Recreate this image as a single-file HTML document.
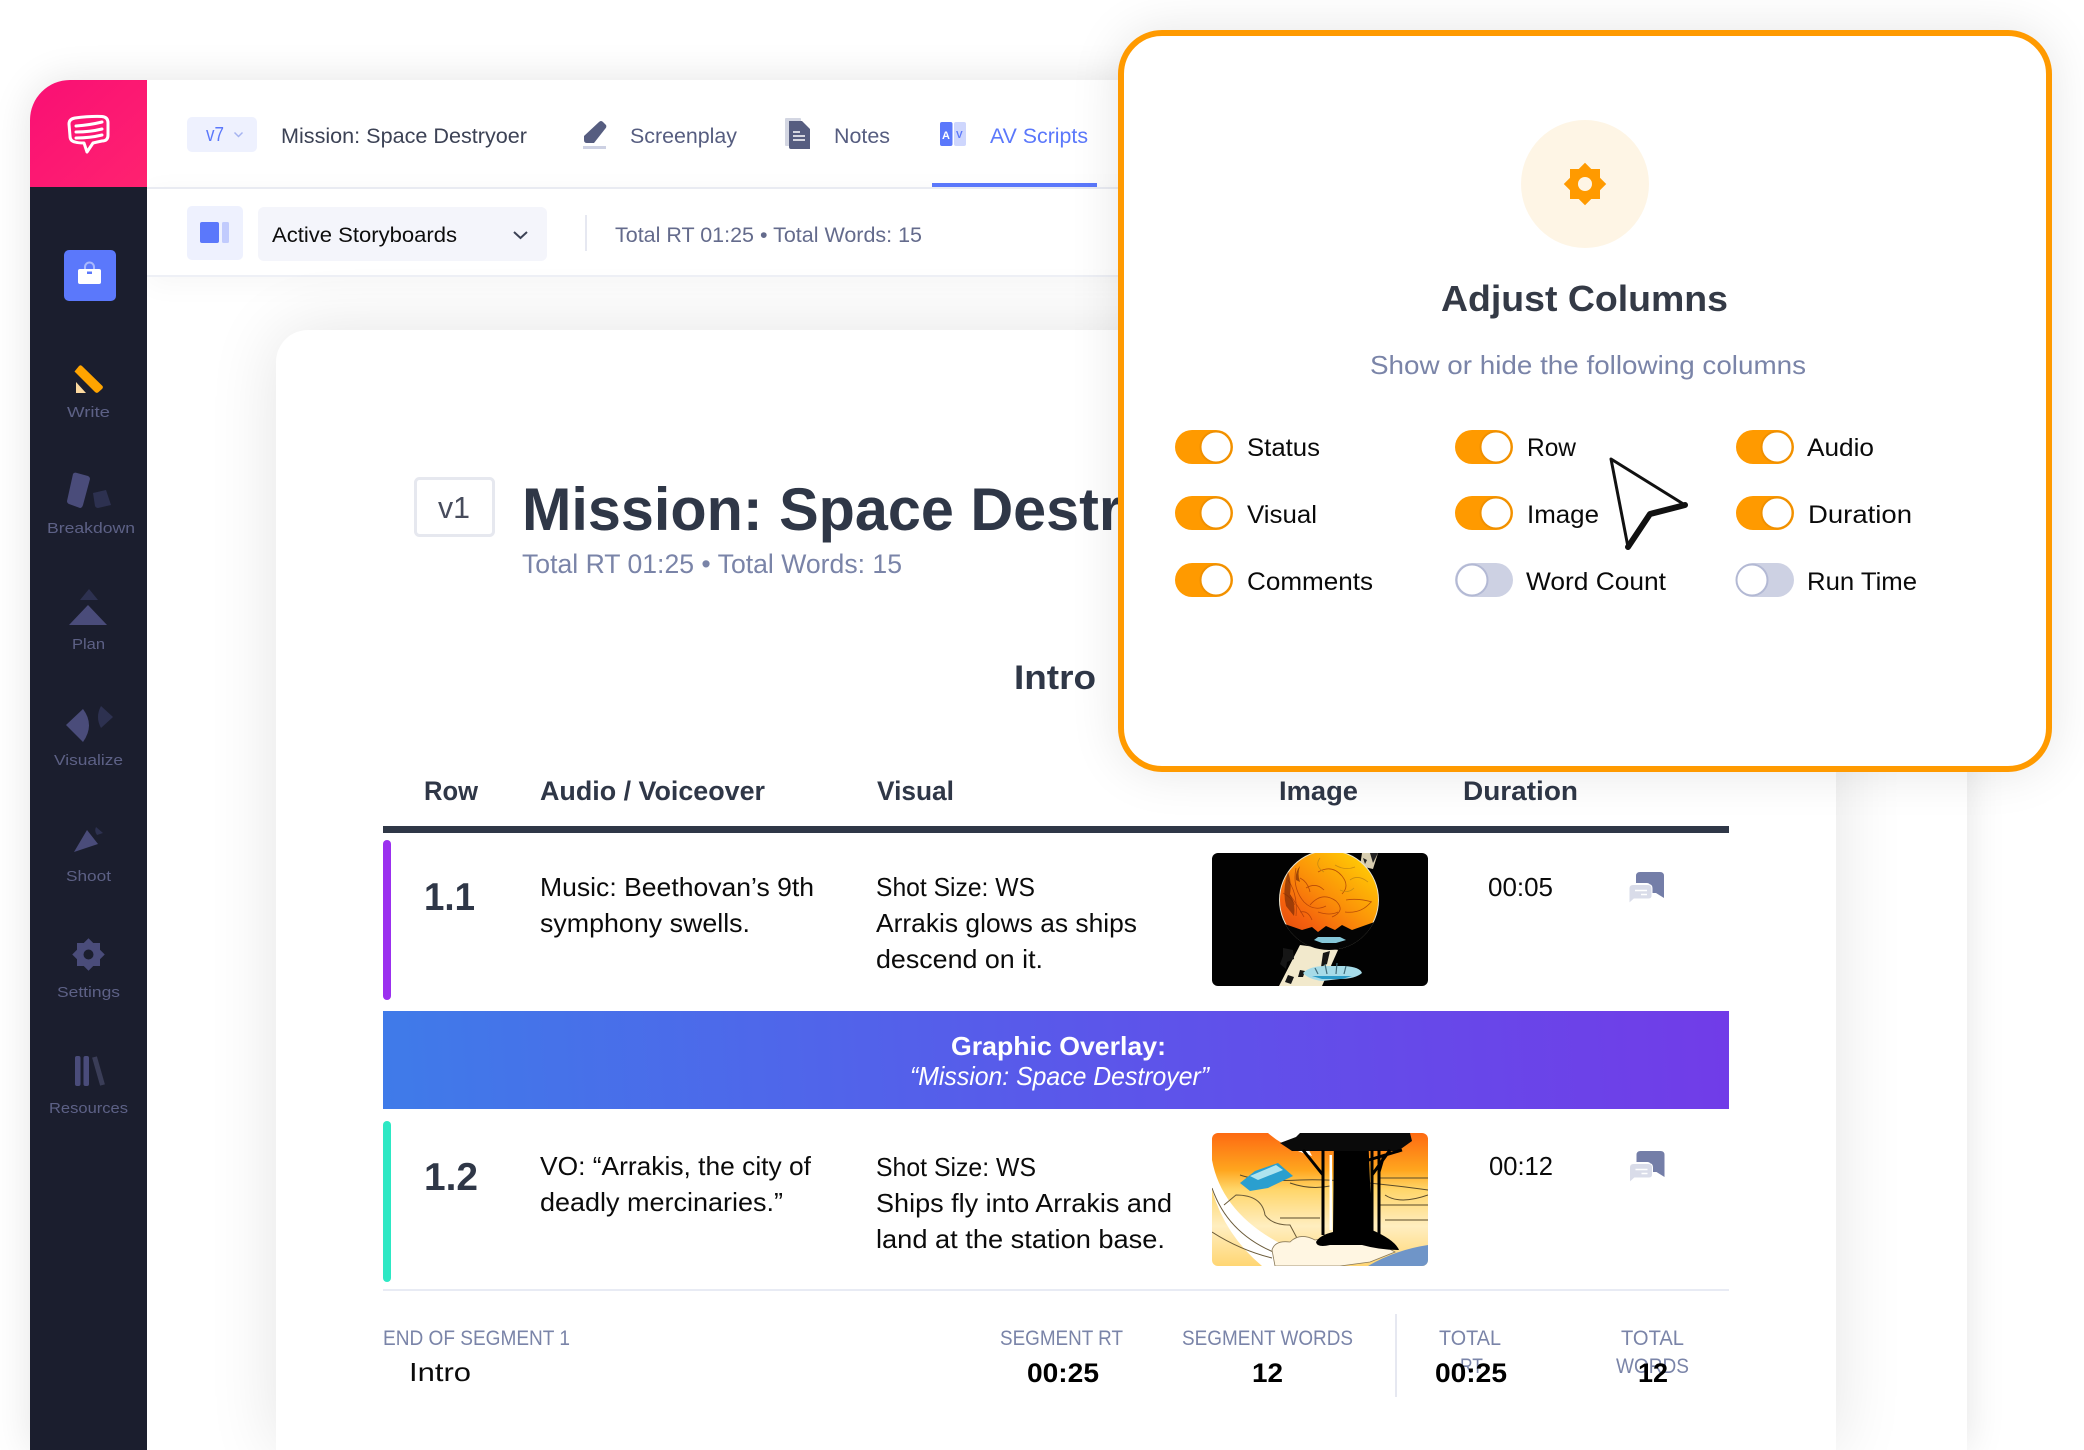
<!DOCTYPE html>
<html lang="en"><head><meta charset="utf-8"><title>Adjust Columns</title>
<style>
html,body{margin:0;padding:0;background:#fff;width:2084px;height:1450px;overflow:hidden}
#wrap{position:relative;width:2084px;height:1450px;overflow:hidden;background:#fff}
.abs{position:absolute}
svg{position:absolute;left:0;top:0}
text{font-family:"Liberation Sans",sans-serif}
.b{font-weight:bold}
.nav{font-size:21px}
.side{font-size:15px;fill:#5d6186}
.body{font-size:26px;fill:#0b0b0b}
.lab{font-size:21px;fill:#7a84a8}
.tog{font-size:25px;fill:#0a0a0a}
</style></head><body><div id="wrap">
<div class="abs" style="left:30px;top:80px;width:1937px;height:1370px;background:#fff;border-top-left-radius:40px;box-shadow:0 0 40px rgba(0,0,0,.11)"></div>
<div class="abs" style="left:147px;top:187px;width:1820px;height:90px;background:#fff;border-top:2px solid #e9ebf2;border-bottom:2px solid #eef0f6;box-sizing:border-box;box-shadow:0 6px 30px rgba(0,0,0,.04)"></div>
<div class="abs" style="left:276px;top:330px;width:1560px;height:1120px;background:#fff;border-top-left-radius:32px;border-top-right-radius:32px;box-shadow:0 0 70px rgba(0,0,0,.11)"></div>

<svg width="2084" height="1450" viewBox="0 0 2084 1450">
<defs>
<linearGradient id="pink" x1="0" y1="0" x2="1" y2="1"><stop offset="0" stop-color="#f90f74"/><stop offset="1" stop-color="#ff2270"/></linearGradient>
<linearGradient id="ov" x1="383" y1="1108" x2="1728" y2="1011" gradientUnits="userSpaceOnUse"><stop offset="0" stop-color="#3f7be9"/><stop offset=".55" stop-color="#5c55ea"/><stop offset="1" stop-color="#713ce8"/></linearGradient>
<linearGradient id="pl" x1="1355" y1="855" x2="1290" y2="935" gradientUnits="userSpaceOnUse"><stop offset="0" stop-color="#ffc805"/><stop offset=".45" stop-color="#fb9208"/><stop offset=".8" stop-color="#f4600e"/><stop offset="1" stop-color="#e4500e"/></linearGradient>
<linearGradient id="sky" x1="0" y1="1133" x2="0" y2="1266" gradientUnits="userSpaceOnUse"><stop offset="0" stop-color="#fd6a12"/><stop offset=".28" stop-color="#ffa61e"/><stop offset=".42" stop-color="#ffd568"/><stop offset=".7" stop-color="#ffeec0"/><stop offset="1" stop-color="#ffd673"/></linearGradient>
<clipPath id="c1"><rect x="1212" y="853" width="216" height="133" rx="6"/></clipPath>
<clipPath id="c2"><rect x="1212" y="1133" width="216" height="133" rx="6"/></clipPath>
<clipPath id="pc"><circle cx="1329" cy="900" r="50"/></clipPath>
</defs>

<!-- sidebar -->
<path d="M30 187V120a40 40 0 0 1 40-40h77v107z" fill="url(#pink)"/>
<rect x="30" y="187" width="117" height="1263" fill="#1b1e2e"/>
<g fill="none" stroke="#fff" stroke-width="3" stroke-linecap="round" stroke-linejoin="round">
<path d="M75 118Q90 116 102 116.500Q108 117 108 123L108 135Q108 141 102 141Q97 142 93 143L87 152L84 143Q78 143 75 142Q70 141 70 136L69 124Q69 119 75 118Z"/>
<path d="M76 126Q90 125 102 122M76 132Q90 132 102 129M76 138Q90 138 102 135"/>
</g>
<rect x="64" y="250" width="52" height="51" rx="5" fill="#5b78fb"/>
<path d="M85 269v-2a4.500 4.500 0 0 1 9 0v2" fill="none" stroke="#a9b9fd" stroke-width="2"/>
<rect x="78" y="269" width="23" height="15" rx="2" fill="#fff"/><rect x="87" y="271.500" width="5" height="2.500" fill="#5b78fb"/>

<path d="M74.500 371.500L79 366Q80.500 364.500 82 366L102.500 386Q103.500 387.500 102 389L98 392.500Q96.500 393.500 95 392Z" fill="#ffa400"/>
<path d="M76 393V382L86 393Z" fill="#fcd9a0"/>
<text class="side" x="67" y="417" textLength="43" lengthAdjust="spacingAndGlyphs">Write</text>

<path d="M73 474Q74 472 77 473L88 476Q90 477 90 479L83 505Q82 508 80 508L69 504Q67 503 67 501Z" fill="#4a4c7a"/>
<path d="M93 493L106 490L111 505L98 508Q96 508 95 506Z" fill="#2d3150"/>
<text class="side" x="47" y="533" textLength="88" lengthAdjust="spacingAndGlyphs">Breakdown</text>

<path d="M80 600L89 589L98 600Z" fill="#2d3150"/><path d="M69 625L88 605L107 625Z" fill="#4a4c7a"/>
<text class="side" x="72" y="649" textLength="33" lengthAdjust="spacingAndGlyphs">Plan</text>

<path d="M66 725L83 709Q95 725 83 742Z" fill="#4a4c7a"/><path d="M101 706L113 717L101 728Q95 717 101 706Z" fill="#2d3150"/>
<text class="side" x="54" y="765" textLength="69" lengthAdjust="spacingAndGlyphs">Visualize</text>

<path d="M74 852L87 830L98 844Z" fill="#4a4c7a"/><path d="M96 827L103 833L97 835Q94 831 96 827Z" fill="#2d3150"/>
<text class="side" x="66" y="881" textLength="45" lengthAdjust="spacingAndGlyphs">Shoot</text>

<g fill="#4a4c7a"><rect x="77" y="943" width="23" height="23"/><rect x="77" y="943" width="23" height="23" transform="rotate(45 88.500 954.500)"/></g><circle cx="88.500" cy="954.500" r="5" fill="#1b1e2e"/>
<text class="side" x="57" y="997" textLength="63" lengthAdjust="spacingAndGlyphs">Settings</text>

<rect x="75" y="1056" width="5.500" height="30" rx="2" fill="#4a4c7a"/><rect x="83.500" y="1056" width="5.500" height="30" rx="2" fill="#4a4c7a"/><path d="M94.500 1057L102.500 1085" stroke="#3a3d57" stroke-width="5" fill="none"/>
<text class="side" x="49" y="1113" textLength="79" lengthAdjust="spacingAndGlyphs">Resources</text>

<!-- top bar -->
<rect x="187" y="117" width="70" height="35" rx="5" fill="#eef1fe"/>
<text x="206" y="141" font-size="20" fill="#5b78fb" textLength="18" lengthAdjust="spacingAndGlyphs">v7</text>
<path d="M234.500 132.500L238.500 136.500L242.500 132.500" fill="none" stroke="#a6b4f0" stroke-width="1.500"/>
<text class="nav" x="281" y="143" fill="#3c4255" textLength="246" lengthAdjust="spacingAndGlyphs">Mission: Space Destryoer</text>

<path d="M584 136L599 122Q601 120 603 122L606 125Q607 127 605 129L594 143L587 143Q584 143 584 140Z" fill="#565d80"/><rect x="583" y="146" width="23" height="3" fill="#cdd1e3"/>
<text class="nav" x="630" y="143" fill="#565d80" textLength="107" lengthAdjust="spacingAndGlyphs">Screenplay</text>

<rect x="785" y="118" width="16" height="28" rx="1" fill="#d3d6e2"/>
<path d="M789 121H802L810 129V149H791Q789 149 789 147Z" fill="#565d80"/>
<path d="M793 132H800M793 136H805M793 140H805" stroke="#fff" stroke-width="1.500"/>
<text class="nav" x="834" y="143" fill="#565d80" textLength="56" lengthAdjust="spacingAndGlyphs">Notes</text>

<rect x="940" y="122" width="12.500" height="24" rx="2" fill="#5b78fb"/><rect x="954" y="122" width="12" height="24" rx="2" fill="#ced6fd"/>
<text class="b" x="942" y="139" font-size="11" fill="#fff">A</text><text class="b" x="956" y="138" font-size="10" fill="#5b78fb">V</text>
<text class="nav" x="990" y="143" fill="#5b78fb" textLength="98" lengthAdjust="spacingAndGlyphs">AV Scripts</text>
<rect x="932" y="183" width="165" height="4" fill="#5b78fb"/>

<!-- second bar -->
<rect x="187" y="206" width="56" height="54" rx="5" fill="#eef1fe"/>
<rect x="200" y="222" width="19" height="21" rx="2" fill="#5b78fb"/><rect x="222" y="222" width="7" height="21" rx="1.500" fill="#c1cbfd"/>
<rect x="258" y="207" width="289" height="54" rx="6" fill="#f4f5fb"/>
<text class="nav" x="272" y="242" fill="#0d0d0d" textLength="185" lengthAdjust="spacingAndGlyphs">Active Storyboards</text>
<path d="M514 232L520.500 238L527 232" fill="none" stroke="#3c4255" stroke-width="2"/>
<rect x="585" y="215" width="2" height="36" fill="#e6e8f1"/>
<text class="nav" x="615" y="242" fill="#646b8c" textLength="307" lengthAdjust="spacingAndGlyphs">Total RT 01:25 • Total Words: 15</text>

<!-- document -->
<rect x="415.500" y="478.500" width="78" height="57" rx="4" fill="#fff" stroke="#e6e8ef" stroke-width="3"/>
<text x="438" y="518" font-size="31" fill="#474c5c" textLength="32" lengthAdjust="spacingAndGlyphs">v1</text>
<text class="b" x="522" y="530" font-size="60" fill="#2f3747" textLength="600" lengthAdjust="spacingAndGlyphs">Mission: Space Destr</text>
<text x="522" y="573" font-size="27" fill="#7a84a8" textLength="380" lengthAdjust="spacingAndGlyphs">Total RT 01:25 • Total Words: 15</text>
<text class="b" x="1014" y="689" font-size="34" fill="#2f3747" textLength="82" lengthAdjust="spacingAndGlyphs">Intro</text>

<g class="b" font-size="27" fill="#2f3747" font-weight="bold">
<text x="424" y="800" textLength="54" lengthAdjust="spacingAndGlyphs">Row</text>
<text x="540" y="800" textLength="225" lengthAdjust="spacingAndGlyphs">Audio / Voiceover</text>
<text x="877" y="800" textLength="77" lengthAdjust="spacingAndGlyphs">Visual</text>
<text x="1279" y="800" textLength="79" lengthAdjust="spacingAndGlyphs">Image</text>
<text x="1463" y="800" textLength="115" lengthAdjust="spacingAndGlyphs">Duration</text>
</g>
<rect x="383" y="826" width="1346" height="7" fill="#2f3747"/>

<!-- row 1 -->
<rect x="383" y="840" width="8" height="160" rx="4" fill="#9b30ef"/>
<text class="b" x="424" y="910" font-size="39" fill="#2f3747" textLength="51" lengthAdjust="spacingAndGlyphs">1.1</text>
<text class="body" x="540" y="896" textLength="274" lengthAdjust="spacingAndGlyphs">Music: Beethovan’s 9th</text>
<text class="body" x="540" y="932" textLength="210" lengthAdjust="spacingAndGlyphs">symphony swells.</text>
<text class="body" x="876" y="896" textLength="159" lengthAdjust="spacingAndGlyphs">Shot Size: WS</text>
<text class="body" x="876" y="932" textLength="261" lengthAdjust="spacingAndGlyphs">Arrakis glows as ships</text>
<text class="body" x="876" y="968" textLength="167" lengthAdjust="spacingAndGlyphs">descend on it.</text>
<g clip-path="url(#c1)">
<rect x="1212" y="853" width="216" height="133" fill="#020202"/>
<path d="M1362 853H1378L1373 869L1360 866Z" fill="#d8ceb0"/><path d="M1370 853h8l-5 10zM1363 858l4 2-2 4z" fill="#222"/>
<path d="M1300 945L1338 950L1322 986H1279Z" fill="#f2e9cc"/>
<path d="M1283 948l10 2 1 9-7 3-1 7-6-5 3-8zM1323 953l7-2-3 13-6 3zM1288 975l6 2-3 7-6-2zM1300 970l5 1-2 6-5 0z" fill="#161616"/>
<circle cx="1329" cy="900" r="50" fill="#e9e3cc"/>
<circle cx="1329" cy="900" r="49" fill="url(#pl)"/>
<g clip-path="url(#pc)">
<path d="M1279 922L1302 930L1312 927L1318 932L1326 926L1335 930L1342 925L1352 930L1380 920V955H1279Z" fill="#040404"/>
<g fill="none" stroke="#a83a08" stroke-width=".8" opacity=".8">
<path d="M1288 880q10 14 8 36M1296 868q-4 20 8 34q10 10 22 4M1310 905q12-14 26-4q10 10-4 16M1345 912q16 2 26-10M1318 872q14-8 24 4q8 10 0 18M1290 895q6 8 14 22"/>
<path d="M1283 893q8 4 12 12M1300 878q8 4 10 14M1306 888q10-6 18 2M1318 912q12 4 20 0M1346 900q12-2 26 2M1300 912q8-2 12 8"/>
</g>
<path d="M1288 872q4 10 2 22q6 10 4 22l-8-10q-4-16 2-34zM1300 866q-3 8 0 16l-4-2q-1-8 4-14z" fill="#7a2c06" opacity=".7"/>
<g fill="none" stroke="#c98a10" stroke-width=".8"><path d="M1335 865q10 6 20 2M1350 880q8-6 18 2M1320 858q-6 8 4 14M1340 890q8 4 14-2"/></g>
<path d="M1318 937h22l6 3-10 3h-14l-8-3z" fill="#86c7d8"/>
</g>
<path d="M1303 973Q1310 966 1325 966L1345 966Q1360 967 1362 973Q1355 979 1340 979L1322 981Q1308 979 1303 973Z" fill="#a6dbe8"/>
<path d="M1312 976h40l-10 3h-20z" fill="#2b9bc7"/><path d="M1315 968l3 6M1325 964l2 10M1337 963l-1 11M1346 966l-2 8" stroke="#3f6b7a" stroke-width="1.200"/>
</g>
<text class="body" x="1488" y="896" textLength="65" lengthAdjust="spacingAndGlyphs">00:05</text>
<g id="cm">
<path d="M1640 872H1660Q1664 872 1664 876V898L1656 893H1650V886Q1650 883 1647 883H1636V876Q1636 872 1640 872Z" fill="#747ea8"/>
<path d="M1633 884.500H1648Q1652 884.500 1652 888.500V896Q1652 899 1648 899H1634L1629 903.500V888.500Q1629 884.500 1633 884.500Z" fill="#d9dce9" stroke="#fff" stroke-width="1"/>
<path d="M1635 890.500H1647M1641 894.500H1647" stroke="#fff" stroke-width="1.500"/>
</g>

<!-- overlay -->
<rect x="383" y="1011" width="1346" height="98" fill="url(#ov)"/>
<text class="b" x="951" y="1055" font-size="26" fill="#fff" textLength="215" lengthAdjust="spacingAndGlyphs">Graphic Overlay:</text>
<text x="910" y="1085" font-size="26" font-style="italic" fill="#fff" textLength="299" lengthAdjust="spacingAndGlyphs">“Mission: Space Destroyer”</text>

<!-- row 2 -->
<rect x="383" y="1121" width="8" height="161" rx="4" fill="#2de8c4"/>
<text class="b" x="424" y="1190" font-size="39" fill="#2f3747" textLength="54" lengthAdjust="spacingAndGlyphs">1.2</text>
<text class="body" x="540" y="1175" textLength="271" lengthAdjust="spacingAndGlyphs">VO: “Arrakis, the city of</text>
<text class="body" x="540" y="1211" textLength="243" lengthAdjust="spacingAndGlyphs">deadly mercinaries.”</text>
<text class="body" x="876" y="1176" textLength="160" lengthAdjust="spacingAndGlyphs">Shot Size: WS</text>
<text class="body" x="876" y="1212" textLength="296" lengthAdjust="spacingAndGlyphs">Ships fly into Arrakis and</text>
<text class="body" x="876" y="1248" textLength="289" lengthAdjust="spacingAndGlyphs">land at the station base.</text>
<g clip-path="url(#c2)">
<rect x="1212" y="1133" width="216" height="133" fill="url(#sky)"/>
<path d="M1268 1133Q1285 1148 1312 1156L1300 1133Z" fill="#fff"/>
<path d="M1212 1160Q1225 1230 1325 1262L1300 1266H1262Q1225 1235 1212 1190Z" fill="#fff"/>
<path d="M1212 1232Q1240 1250 1272 1258M1212 1188Q1230 1240 1290 1258M1224 1205L1236 1195Q1262 1195 1265 1215Q1272 1225 1290 1225L1298 1240" fill="none" stroke="#6a5a38" stroke-width="1"/>
<path d="M1240 1175Q1260 1182 1300 1180T1428 1190M1290 1183Q1310 1190 1330 1186M1380 1178H1428M1380 1205H1428M1385 1220H1428M1280 1218H1320M1385 1195Q1400 1205 1428 1195" fill="none" stroke="#5a4a28" stroke-width="1"/>
<path d="M1272 1250Q1275 1240 1290 1242Q1300 1232 1315 1240Q1335 1236 1350 1240Q1375 1240 1395 1252L1370 1262L1340 1266H1275Z" fill="#fff6e2" stroke="#8a7a5a" stroke-width=".8"/>
<path d="M1368 1266Q1395 1250 1428 1245V1266Z" fill="#6f95c8"/>
<path d="M1334 1133H1368L1372 1230Q1395 1240 1399 1250Q1380 1250 1362 1245L1330 1245Q1317 1248 1316 1242Q1320 1235 1333 1232Z" fill="#000"/>
<path d="M1280 1143L1296 1137L1300 1133H1410L1412 1141L1398 1151H1292Z" fill="#0a0a0a"/>
<path d="M1303 1150L1323 1175M1323 1150V1235M1352 1165L1402 1150M1372 1150V1235M1379 1150V1236M1390 1150L1372 1175M1384 1155L1379 1172" stroke="#000" stroke-width="3" fill="none"/>
<path d="M1329.500 1155h2.500v75h-2.500z" fill="#fff"/>
<path d="M1240 1183L1255 1171L1278 1163L1293 1176L1268 1188L1250 1191Z" fill="#2a9fcf"/>
<path d="M1250 1176L1276 1165L1283 1170L1258 1180Z" fill="#aee3ef"/>
</g>
<text class="body" x="1489" y="1175" textLength="64" lengthAdjust="spacingAndGlyphs">00:12</text>
<use href="#cm" x="0.500" y="279"/>
<rect x="383" y="1289" width="1346" height="2" fill="#e8ebf4"/>

<!-- footer -->
<text class="lab" x="383" y="1345" textLength="187" lengthAdjust="spacingAndGlyphs">END OF SEGMENT 1</text>
<text class="body" x="409" y="1381" textLength="62" lengthAdjust="spacingAndGlyphs">Intro</text>
<text class="lab" x="1000" y="1345" textLength="123" lengthAdjust="spacingAndGlyphs">SEGMENT RT</text>
<text class="b" x="1027" y="1382" font-size="27" fill="#000" textLength="72" lengthAdjust="spacingAndGlyphs">00:25</text>
<text class="lab" x="1182" y="1345" textLength="171" lengthAdjust="spacingAndGlyphs">SEGMENT WORDS</text>
<text class="b" x="1252" y="1382" font-size="27" fill="#000" textLength="31" lengthAdjust="spacingAndGlyphs">12</text>
<rect x="1395" y="1314" width="2" height="83" fill="#e6e8f1"/>
<text class="lab" x="1439" y="1345" textLength="62" lengthAdjust="spacingAndGlyphs">TOTAL</text>
<text class="lab" x="1460" y="1373" textLength="23" lengthAdjust="spacingAndGlyphs">RT</text>
<text class="b" x="1435" y="1382" font-size="27" fill="#000" textLength="72" lengthAdjust="spacingAndGlyphs">00:25</text>
<text class="lab" x="1621" y="1345" textLength="63" lengthAdjust="spacingAndGlyphs">TOTAL</text>
<text class="lab" x="1616" y="1373" textLength="73" lengthAdjust="spacingAndGlyphs">WORDS</text>
<text class="b" x="1638" y="1382" font-size="27" fill="#000" textLength="30" lengthAdjust="spacingAndGlyphs">12</text>
</svg>

<!-- modal -->
<div class="abs" style="left:1118px;top:30px;width:934px;height:742px;box-sizing:border-box;background:#fff;border:6px solid #ff9a00;border-radius:44px;box-shadow:0 0 50px rgba(0,0,0,.1)"></div>
<svg width="2084" height="1450" viewBox="0 0 2084 1450">
<circle cx="1585" cy="184" r="64" fill="#fef5e5"/>
<g fill="#ff9a00"><rect x="1570" y="169" width="30" height="30"/><rect x="1570" y="169" width="30" height="30" transform="rotate(45 1585 184)"/></g>
<circle cx="1585" cy="184" r="7" fill="#fef5e5"/>
<text class="b" x="1441" y="311" font-size="36" fill="#343a46" textLength="287" lengthAdjust="spacingAndGlyphs">Adjust Columns</text>
<text x="1370" y="374" font-size="26" fill="#7a84a8" textLength="436" lengthAdjust="spacingAndGlyphs">Show or hide the following columns</text>

<g>
<rect x="1175" y="430" width="58" height="34" rx="17" fill="#ff9a00"/><circle cx="1216" cy="447" r="15.500" fill="#fff" stroke="#f09000" stroke-width="2"/>
<rect x="1455" y="430" width="58" height="34" rx="17" fill="#ff9a00"/><circle cx="1496" cy="447" r="15.500" fill="#fff" stroke="#f09000" stroke-width="2"/>
<rect x="1736" y="430" width="58" height="34" rx="17" fill="#ff9a00"/><circle cx="1777" cy="447" r="15.500" fill="#fff" stroke="#f09000" stroke-width="2"/>
<rect x="1175" y="496" width="58" height="34" rx="17" fill="#ff9a00"/><circle cx="1216" cy="513" r="15.500" fill="#fff" stroke="#f09000" stroke-width="2"/>
<rect x="1455" y="496" width="58" height="34" rx="17" fill="#ff9a00"/><circle cx="1496" cy="513" r="15.500" fill="#fff" stroke="#f09000" stroke-width="2"/>
<rect x="1736" y="496" width="58" height="34" rx="17" fill="#ff9a00"/><circle cx="1777" cy="513" r="15.500" fill="#fff" stroke="#f09000" stroke-width="2"/>
<rect x="1175" y="563" width="58" height="34" rx="17" fill="#ff9a00"/><circle cx="1216" cy="580" r="15.500" fill="#fff" stroke="#f09000" stroke-width="2"/>
<rect x="1455" y="563" width="58" height="34" rx="17" fill="#cdd1e3"/><circle cx="1472" cy="580" r="15.500" fill="#fff" stroke="#b3b9d4" stroke-width="2"/>
<rect x="1736" y="563" width="58" height="34" rx="17" fill="#cdd1e3"/><circle cx="1752" cy="580" r="15.500" fill="#fff" stroke="#b3b9d4" stroke-width="2"/>
</g>
<text class="tog" x="1247" y="456" textLength="73" lengthAdjust="spacingAndGlyphs">Status</text>
<text class="tog" x="1247" y="523" textLength="70" lengthAdjust="spacingAndGlyphs">Visual</text>
<text class="tog" x="1247" y="590" textLength="126" lengthAdjust="spacingAndGlyphs">Comments</text>
<text class="tog" x="1527" y="456" textLength="49" lengthAdjust="spacingAndGlyphs">Row</text>
<text class="tog" x="1527" y="523" textLength="72" lengthAdjust="spacingAndGlyphs">Image</text>
<text class="tog" x="1526" y="590" textLength="140" lengthAdjust="spacingAndGlyphs">Word Count</text>
<text class="tog" x="1807" y="456" textLength="67" lengthAdjust="spacingAndGlyphs">Audio</text>
<text class="tog" x="1808" y="523" textLength="104" lengthAdjust="spacingAndGlyphs">Duration</text>
<text class="tog" x="1807" y="590" textLength="110" lengthAdjust="spacingAndGlyphs">Run Time</text>

<path d="M1611 459L1685 505L1650 514L1628 547Z" fill="#fff" stroke="#111" stroke-width="3" stroke-linejoin="round"/>
<path d="M1685 505L1650 514L1628 547" fill="none" stroke="#111" stroke-width="6" stroke-linejoin="round" stroke-linecap="round"/>
</svg>
</div></body></html>
